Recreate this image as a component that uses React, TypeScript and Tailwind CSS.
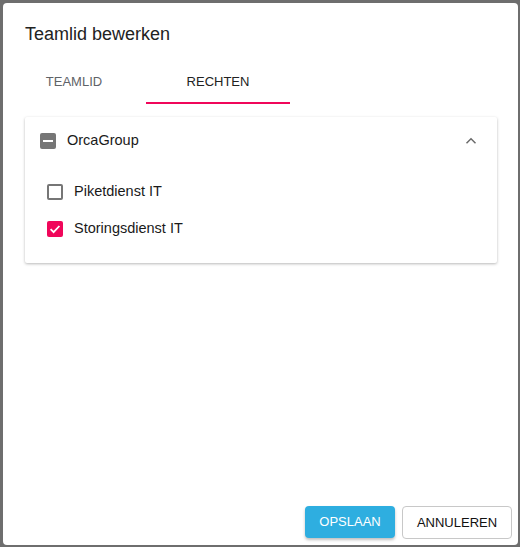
import React, { useState } from 'react';

type Right = { id: string; label: string; checked: boolean };

const INITIAL_RIGHTS: Right[] = [
  { id: 'piket', label: 'Piketdienst IT', checked: false },
  { id: 'storing', label: 'Storingsdienst IT', checked: true },
];

function Checkbox({ checked, indeterminate }: { checked?: boolean; indeterminate?: boolean }) {
  if (indeterminate) {
    return (
      <span className="w-[16px] h-[16px] rounded-[2px] bg-[#767676] flex items-center justify-center">
        <span className="w-[10px] h-[2px] bg-white" />
      </span>
    );
  }
  if (checked) {
    return (
      <span className="w-[16px] h-[16px] rounded-[2px] bg-[#f0065a] flex items-center justify-center">
        <svg viewBox="0 0 16 16" className="w-[16px] h-[16px]" fill="none">
          <path d="M3.6 8.2 L6.6 11.1 L12.4 5" stroke="white" strokeWidth="1.8" />
        </svg>
      </span>
    );
  }
  return <span className="w-[16px] h-[16px] rounded-[2px] border-2 border-[#767676] bg-white" />;
}

export default function App() {
  const [activeTab, setActiveTab] = useState<'teamlid' | 'rechten'>('rechten');
  const [rights, setRights] = useState<Right[]>(INITIAL_RIGHTS);

  const toggle = (id: string) =>
    setRights(prev => prev.map(r => (r.id === id ? { ...r, checked: !r.checked } : r)));

  return (
    <div className="h-[547px] w-[520px] bg-[#6e6e6e] pt-[3px] pl-[3px] pr-[2px] overflow-hidden font-['Liberation_Sans',Arial,sans-serif]">
      <div className="h-[542px] bg-white rounded-[4px] flex flex-col">
        <h2 className="pl-[22px] pt-[20px] text-[18px] leading-[22px] text-[#222]">Teamlid bewerken</h2>

        {/* Tabs */}
        <div className="flex mt-[15px] h-[44px]">
          <button
            onClick={() => setActiveTab('teamlid')}
            className={`w-[144px] -ml-[1px] text-[13px] relative ${activeTab === 'teamlid' ? 'text-[#222]' : 'text-[#5f6368]'}`}
          >
            TEAMLID
            {activeTab === 'teamlid' && <span className="absolute left-0 right-0 bottom-0 h-[2px] bg-[#f0065a]" />}
          </button>
          <button
            onClick={() => setActiveTab('rechten')}
            className={`w-[144px] text-[13px] relative ${activeTab === 'rechten' ? 'text-[#222]' : 'text-[#5f6368]'}`}
          >
            RECHTEN
            {activeTab === 'rechten' && <span className="absolute left-0 right-0 bottom-0 h-[2px] bg-[#f0065a]" />}
          </button>
        </div>

        {/* Rights panel */}
        <div className="mt-[13px] mx-[22px] w-[472px] bg-white rounded-[2px] shadow-[0_1px_3px_rgba(0,0,0,0.28)] pb-[24px]">
          <div className="h-[48px] flex items-center pl-[15px] pr-[16px]">
            <Checkbox indeterminate />
            <span className="ml-[11px] text-[14.5px] text-[#1a1a1a]">OrcaGroup</span>
            <svg viewBox="0 0 24 24" className="ml-auto w-[20px] h-[20px]" fill="none">
              <path d="M6.6 14.6 L12 9.4 L17.4 14.6" stroke="#6b6b6b" strokeWidth="1.8" />
            </svg>
          </div>
          <div className="pt-[17px] flex flex-col gap-[17px] pl-[22px]">
            {rights.map(r => (
              <label key={r.id} onClick={() => toggle(r.id)} className="h-[20px] flex items-center cursor-pointer">
                <Checkbox checked={r.checked} />
                <span className="ml-[11px] text-[14.5px] text-[#1a1a1a]">{r.label}</span>
              </label>
            ))}
          </div>
        </div>

        {/* Actions */}
        <div className="mt-auto flex justify-end gap-[7px] pr-[6px] pb-[6px]">
          <button className="w-[90px] h-[32px] rounded-[4px] bg-[#2eaee0] text-white text-[13px] shadow-[0_2px_3px_rgba(0,0,0,0.25)]">
            OPSLAAN
          </button>
          <button className="w-[110px] h-[33px] rounded-[4px] border border-[#c8c8c8] bg-white text-[#111] text-[13px]">
            ANNULEREN
          </button>
        </div>
      </div>
    </div>
  );
}
